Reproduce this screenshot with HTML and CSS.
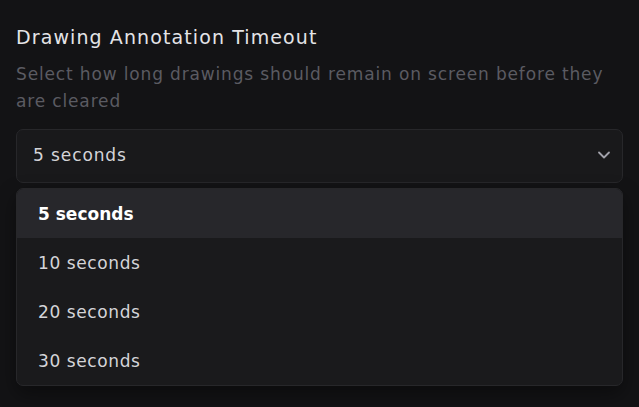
FILE: index.html
```html
<!DOCTYPE html>
<html lang="en">
<head>
    <meta charset="UTF-8">
    <meta name="viewport" content="width=device-width, initial-scale=1.0">
    <title>Drawing Annotation Timeout</title>
    <link rel="stylesheet" href="styles.css">
</head>
<body>
    <div class="setting">
        <h3 class="setting-title">Drawing Annotation Timeout</h3>
        <p class="setting-desc">Select how long drawings should remain on screen before they are cleared</p>

        <button class="select-trigger" type="button">
            <span>5 seconds</span>
            <svg class="chevron" width="20" height="20" viewBox="0 0 24 24" fill="none" stroke="currentColor" stroke-width="2.2" stroke-linecap="round" stroke-linejoin="round">
                <path d="M6 9l6 6 6-6"/>
            </svg>
        </button>

        <ul class="select-menu">
            <li class="option selected">5 seconds</li>
            <li class="option">10 seconds</li>
            <li class="option">20 seconds</li>
            <li class="option">30 seconds</li>
        </ul>
    </div>
</body>
</html>
```

FILE: styles.css
```css
* {
    margin: 0;
    padding: 0;
    box-sizing: border-box;
}

body {
    font-family: 'DejaVu Sans', sans-serif;
    background: #131315;
    color: #e4e4e7;
    height: 100vh;
}

.setting {
    padding: 22px 16px 0 16px;
    display: flex;
    flex-direction: column;
}

.setting-title {
    font-size: 19px;
    font-weight: 400;
    letter-spacing: 1.1px;
    color: #e4e4e7;
    line-height: 30px;
}

.setting-desc {
    margin-top: 9px;
    font-size: 17px;
    letter-spacing: 0.85px;
    line-height: 27px;
    color: #5b5b62;
}

.select-trigger {
    margin-top: 14px;
    height: 54px;
    width: 100%;
    display: flex;
    align-items: center;
    justify-content: space-between;
    padding: 0 8px 3px 16px;
    background: #19191b;
    border: 1px solid #27272a;
    border-radius: 7px;
    font-family: inherit;
    font-size: 17px;
    letter-spacing: 0.9px;
    color: #d4d4d8;
    cursor: pointer;
}

.chevron {
    color: #a1a1aa;
}

.select-menu {
    list-style: none;
    margin-top: 5px;
    background: #1a1a1c;
    border: 1px solid #27272a;
    border-radius: 7px;
    overflow: hidden;
    box-shadow: 0 8px 20px rgba(0, 0, 0, 0.4);
}

.option {
    height: 49px;
    display: flex;
    align-items: center;
    padding-left: 21px;
    font-size: 17px;
    letter-spacing: 0.6px;
    color: #d4d4d8;
}

.option.selected {
    background: #27272b;
    color: #ffffff;
    font-weight: 700;
    letter-spacing: 0;
}
```
